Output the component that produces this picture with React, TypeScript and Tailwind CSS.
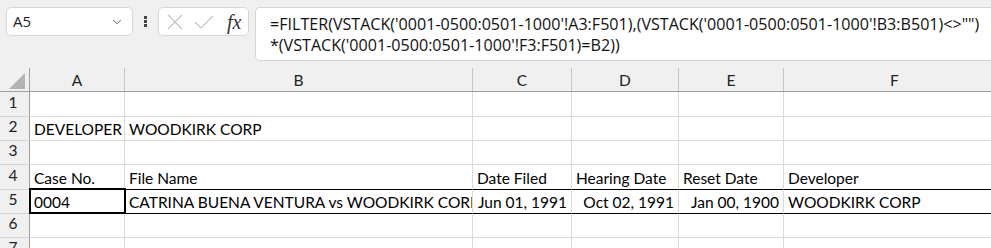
import { ChevronDown } from "lucide-react";

const cols = ["A", "B", "C", "D", "E", "F"];
const colWidths = ["w-[95px]", "w-[348px]", "w-[99px]", "w-[107px]", "w-[105px]", "w-[222px]"];
const rowHeights = ["h-[25px]", "h-[24px]", "h-[24px]", "h-[25px]", "h-[24px]", "h-[24px]", "h-[24px]"];

type Cell = { text?: string; right?: boolean };

const rows: Cell[][] = [
  [],
  [{ text: "DEVELOPER" }, { text: "WOODKIRK CORP" }],
  [],
  [
    { text: "Case No." },
    { text: "File Name" },
    { text: "Date Filed" },
    { text: "Hearing Date" },
    { text: "Reset Date" },
    { text: "Developer" },
  ],
  [
    { text: "0004" },
    { text: "CATRINA BUENA VENTURA vs WOODKIRK CORP" },
    { text: "Jun 01, 1991", right: true },
    { text: "Oct 02, 1991", right: true },
    { text: "Jan 00, 1900", right: true },
    { text: "WOODKIRK CORP" },
  ],
  [],
  [],
];

export default function App() {
  return (
    <div className="w-[991px] h-[248px] overflow-hidden bg-white font-['Lato','Liberation_Sans',sans-serif] text-black">
      {/* Formula bar */}
      <div className="h-[68px] bg-[#f0f0f0]">
        <div className="flex items-start pt-[7px] pl-[6px]">
          <div className="w-[127px] h-[29px] shrink-0 bg-white border border-[#d6d6d6] rounded-[5px] flex items-center justify-between pl-[6px] pr-[8px]">
            <span className="text-[15px] font-['Open_Sans',sans-serif] text-[#222]">A5</span>
            <ChevronDown className="h-[14px] w-[14px] text-[#444]" strokeWidth={1.5} />
          </div>
          <div className="w-[25px] h-[29px] shrink-0 flex flex-col items-center justify-center gap-[1px]">
            <div className="w-[3px] h-[3px] bg-[#444]" />
            <div className="w-[3px] h-[3px] bg-[#444]" />
            <div className="w-[3px] h-[3px] bg-[#444]" />
          </div>
          <div className="w-[91px] h-[29px] shrink-0 bg-white border border-[#d6d6d6] rounded-[5px] flex items-center pl-[8px]">
            <svg width="16" height="16" viewBox="0 0 16 16" className="text-[#c4c4c4]">
              <path d="M1 1 L15 15 M15 1 L1 15" stroke="currentColor" strokeWidth="1.2" fill="none" />
            </svg>
            <svg width="20" height="16" viewBox="0 0 20 16" className="ml-[11px] text-[#c4c4c4]">
              <path d="M1 8 L7 14 L19 2" stroke="currentColor" strokeWidth="1.2" fill="none" />
            </svg>
            <span className="ml-[13px] text-[20px] italic font-['Liberation_Serif',serif] text-[#333] leading-none">fx</span>
          </div>
          <div className="ml-[6px] flex-1 h-[54px] bg-white border border-[#d6d6d6] rounded-l-[5px] border-r-0 pl-[14px] pt-[6px] text-[16.1px] leading-[21px] font-['Open_Sans',sans-serif] text-[#111] whitespace-nowrap overflow-hidden">
            <div>=FILTER(VSTACK('0001-0500:0501-1000'!A3:F501),(VSTACK('0001-0500:0501-1000'!B3:B501)&lt;&gt;"")</div>
            <div>*(VSTACK('0001-0500:0501-1000'!F3:F501)=B2))</div>
          </div>
        </div>
      </div>

      {/* Column headers */}
      <div className="flex h-[24px] bg-[#f0f0f0] border-b border-[#9e9e9e]">
        <div className="w-[30px] shrink-0 border-r border-[#9e9e9e] flex items-end justify-end pr-[3px] pb-[2px]">
          <svg width="17" height="16" viewBox="0 0 17 16">
            <polygon points="16,0 16,16 0,16" fill="#b3b3b3" />
          </svg>
        </div>
        {cols.map((c, i) => (
          <div
            key={c}
            className={`${colWidths[i]} shrink-0 border-r border-[#c4c4c4] flex items-center justify-center text-[15.5px] text-[#222] pt-[2px]`}
          >
            {c}
          </div>
        ))}
      </div>

      {/* Rows */}
      <div className="relative">
        {rows.map((row, r) => (
          <div key={r} className={`flex ${rowHeights[r]}`}>
            <div className="w-[30px] shrink-0 bg-[#f0f0f0] border-r border-[#9e9e9e] border-b border-b-[#d6d6d6] flex items-end justify-center pb-[2px] pr-[3px] text-[15.5px] text-[#222]">
              {r + 1}
            </div>
            {cols.map((c, i) => {
              const cell = row[i];
              const border =
                r === 3 || r === 4 ? "border-b border-b-black" : "border-b border-b-[#dadada]";
              return (
                <div
                  key={c}
                  className={`${colWidths[i]} shrink-0 border-r border-r-[#dadada] ${border} flex items-end overflow-hidden whitespace-nowrap text-[15.5px] leading-[18px] pb-[2px] ${
                    cell?.right ? "justify-end pr-[4px]" : "pl-[4px]"
                  }`}
                >
                  {cell?.text}
                </div>
              );
            })}
          </div>
        ))}
        {/* active cell */}
        <div className="absolute left-[29px] top-[96px] w-[97px] h-[26px] border-2 border-black pointer-events-none" />
      </div>
    </div>
  );
}
